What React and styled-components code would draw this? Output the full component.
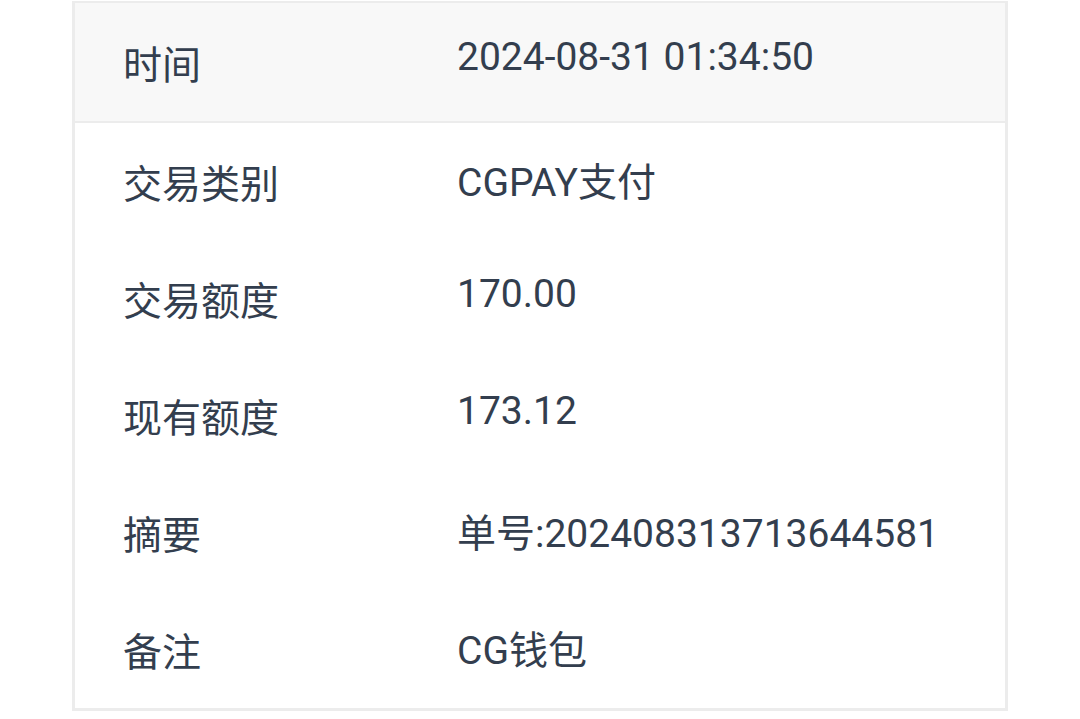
import React from "react";
import styled, { createGlobalStyle } from "styled-components";

const Global = createGlobalStyle`
  html, body { margin: 0; padding: 0; background: #ffffff; }
  body { font-family: Roboto, "Noto Sans CJK SC", sans-serif; }
`;

const Page = styled.div`
  width: 1080px;
  height: 719px;
  padding-top: 1px;
  padding-left: 72px;
  box-sizing: border-box;
  background: #ffffff;
  overflow: hidden;
`;

const Card = styled.div`
  width: 936px;
  box-sizing: border-box;
  border: 3px solid #ececec;
  border-top-width: 2px;
  background: #ffffff;
  display: flex;
  flex-direction: column;
`;

const Row = styled.div`
  display: flex;
  align-items: center;
  height: ${(p) => (p.$head ? "118px" : "117px")};
  padding-left: 48px;
  background: ${(p) => (p.$head ? "#f8f8f8" : "#ffffff")};
  border-bottom: ${(p) => (p.$head ? "2px solid #ececec" : "none")};
  color: #333e4e;
  font-size: 39px;
  line-height: 1;
`;

const Label = styled.div`
  width: 334px;
  flex: none;
  font-family: "Noto Sans CJK SC", sans-serif;
`;

const Value = styled.div`
  font-family: Roboto, "Noto Sans CJK SC", sans-serif;
  transform: translateY(${(p) => p.$dy || 0}px);
`;

const rows = [
  { label: "时间", value: "2024-08-31 01:34:50", head: true, dy: -5 },
  { label: "交易类别", value: "CGPAY支付", dy: 2 },
  { label: "交易额度", value: "170.00", dy: -4 },
  { label: "现有额度", value: "173.12", dy: -4 },
  { label: "摘要", value: "单号:202408313713644581", dy: 2 },
  { label: "备注", value: "CG钱包", dy: 2 },
];

export default function App() {
  return (
    <>
      <Global />
      <Page>
        <Card>
          {rows.map((r) => (
            <Row key={r.label} $head={r.head}>
              <Label>{r.label}</Label>
              <Value $dy={r.dy}>{r.value}</Value>
            </Row>
          ))}
        </Card>
      </Page>
    </>
  );
}
